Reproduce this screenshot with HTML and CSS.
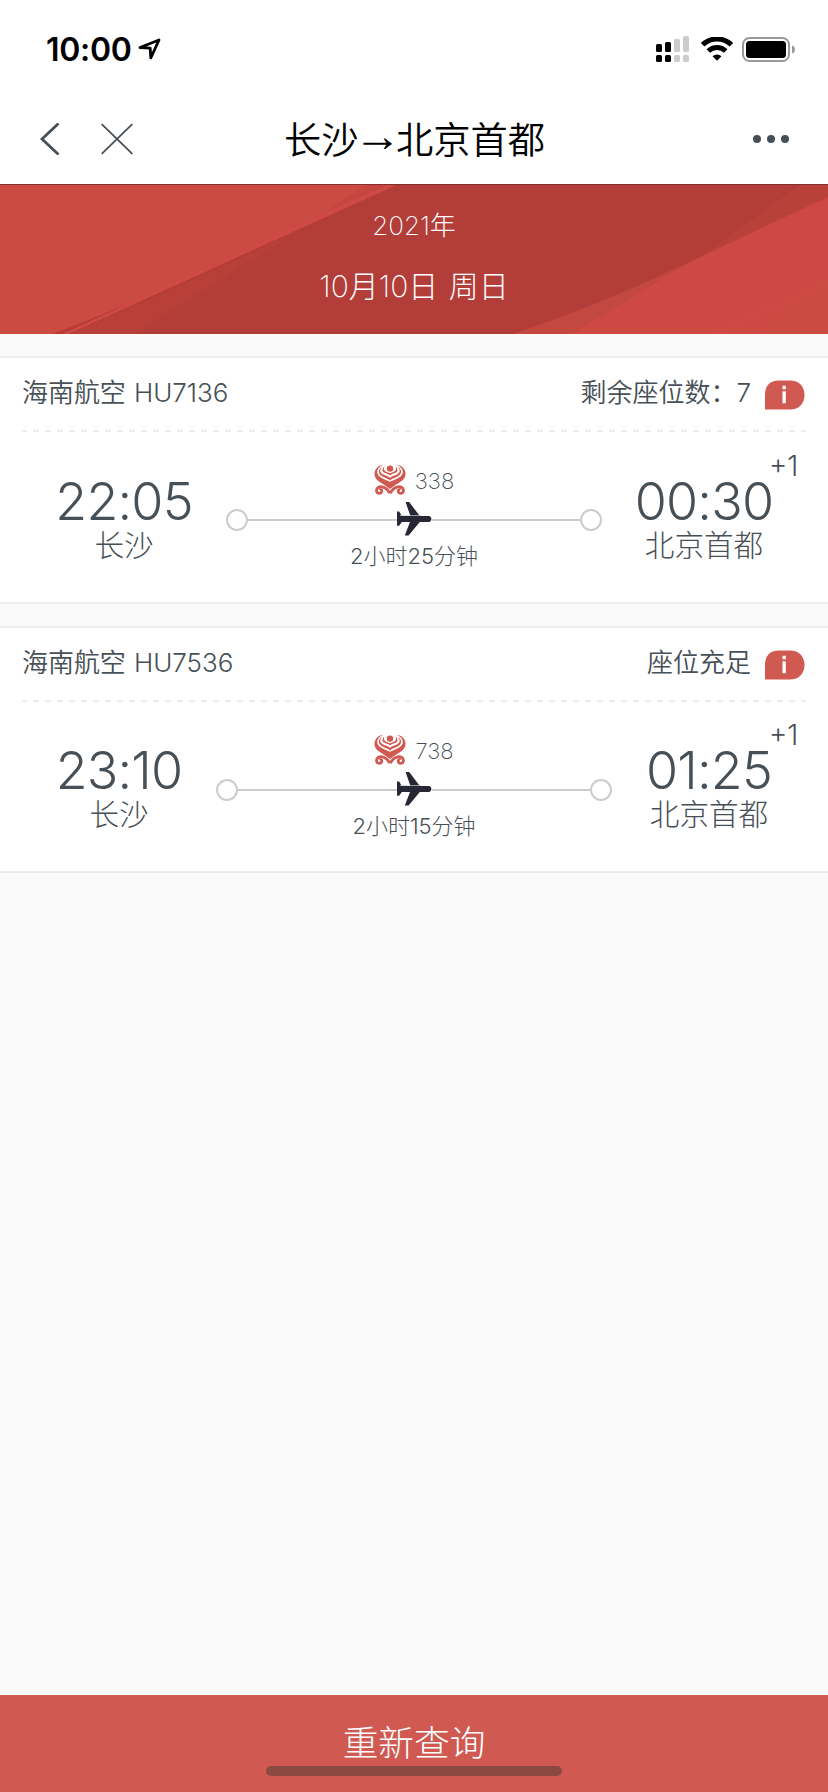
FILE: index.html
```html
<!DOCTYPE html>
<html lang="zh-CN">
<head>
<meta charset="utf-8">
<title>长沙→北京首都</title>
<link rel="stylesheet" href="styles.css">
</head>
<body>
<svg class="defs" width="0" height="0">
  <defs>
    <symbol id="plane" viewBox="0 0 36 34">
      <path d="M0 9.500h2.200l2.600 4.600h8.600L8.600 0h3.600l10.600 14.100h9.400a3 3 0 0 1 0 5.800h-9.400L11.600 33.400H7.800l5.200-13.500H4.800l-2.600 3.800H0z"/>
      <path class="plane-shine" d="M3 13.500h21"/>
    </symbol>
    <symbol id="airline" viewBox="0 0 32 31">
      <circle cx="16" cy="4.600" r="3.200"/>
      <path d="M9.500.8C3.500 1.500.5 5.500.5 10c0 6.500 7 8.500 15.500 15C24.500 18.500 31.500 16.500 31.500 10c0-4.500-3-8.500-9-9.200 4.500 2 6.600 4.500 6.300 7.700-.5 4.600-6.300 6.300-12.800 9.300C9.500 14.800 3.700 13.100 3.200 8.500 2.900 5.300 5 2.800 9.500.8z"/>
      <path d="M8.200 2.600C3.600 6 4 10.200 8 12.300c2.800 1.500 5.500 2.200 8 4.100 2.500-1.900 5.200-2.600 8-4.100 4-2.100 4.400-6.300-.2-9.700 2.800 3.500 2.400 6-.5 7.700-2.200 1.300-5 1.600-7.300 3.400-2.300-1.800-5.100-2.100-7.300-3.400-2.900-1.700-3.300-4.200-.5-7.700z"/>
      <path d="M10.500 2.300C7.600 5.200 8 7.900 11 9.100c1.800.8 3.500 1.100 5 2.300 1.500-1.200 3.200-1.500 5-2.300 3-1.200 3.400-3.900.5-6.800 1.200 2.700.7 4.100-1.200 5.100-1.300.7-3 1-4.300 2-1.300-1-3-1.300-4.300-2-1.900-1-2.400-2.400-1.200-5.100z"/>
      <path class="curl" d="M15.500 29.200C13 22.500 3 20 2.500 26.300c0 4 5.500 4 5.300.6-.1-1.500-1.500-1.600-2.200-.9M16.500 29.200C19 22.500 29 20 29.500 26.300c0 4-5.500 4-5.300.6.1-1.500 1.500-1.600 2.200-.9"/>
    </symbol>
    <symbol id="info" viewBox="0 0 40 30">
      <path d="M0 29.500V15C0 5.500 5 .5 14 .5h11c9 0 14.500 6 14.500 14.500S34 29.500 25 29.500z"/>
      <path class="info-i" d="M17.500 5.800h3.300v3.400h-3.300zM17.500 11.200h3.300v12h-3.300z"/>
    </symbol>
  </defs>
</svg>
<div class="screen">
  <header>
    <div class="status">
      <span class="clock">10:00</span>
      <svg class="locate" width="24" height="23" viewBox="0 0 24 23"><path d="M2 9.500 21 2 12.800 19.800 12.200 10.200z"/></svg>
      <span class="spacer"></span>
      <svg class="signal" width="34" height="27" viewBox="0 0 34 27">
        <g><rect x="0" y="8" width="6" height="8" rx="1.500"/><rect x="9" y="6" width="6" height="10" rx="1.500"/><rect x="0" y="19" width="6" height="7" rx="1.500"/><rect x="9" y="19" width="6" height="7" rx="1.500"/></g>
        <g class="weak"><rect x="18" y="3" width="6" height="13" rx="1.500"/><rect x="27" y="0" width="6" height="16" rx="1.500"/><rect x="18" y="19" width="6" height="7" rx="1.500"/><rect x="27" y="19" width="6" height="7" rx="1.500"/></g>
      </svg>
      <svg class="wifi" width="32" height="24" viewBox="0 0 32 24"><path class="arc" d="M1.600 7.800a20.500 20.500 0 0 1 28.800 0M7.300 14a12.300 12.300 0 0 1 17.400 0"/><path d="M16 23.800l-4.500-4.500a6.400 6.400 0 0 1 9 0z"/></svg>
      <svg class="battery" width="54" height="25" viewBox="0 0 54 25"><rect class="case" x="1" y="1" width="46" height="23" rx="6.500"/><rect x="4" y="4" width="40" height="17" rx="3.500"/><path class="tip" d="M50 8.500c4 1 4 7 0 8z"/></svg>
    </div>
    <nav>
      <svg class="back" width="20" height="32" viewBox="0 0 20 32"><path d="M18.500.5 2 16l16.500 15.500"/></svg>
      <svg class="close" width="32" height="32" viewBox="0 0 32 32"><path d="M.7 1.200 31.300 30.800M31.300 1.200.7 30.800"/></svg>
      <h1>长沙<span class="arrow">→</span>北京首都</h1>
      <svg class="more" width="36" height="8" viewBox="0 0 36 8"><circle cx="4" cy="4" r="4"/><circle cx="18" cy="4" r="4"/><circle cx="32" cy="4" r="4"/></svg>
    </nav>
  </header>
  <section class="banner">
    <svg class="rays" width="828" height="150" viewBox="0 0 828 150" preserveAspectRatio="none">
      <path fill="#cb4b42" d="M0 0H396L66 150H0z"/>
      <path fill="#cf4a44" d="M388 0h8L66 150h-5L322 29z"/>
      <path fill="#c44640" d="M366 0h22L322 29z"/>
      <path fill="#b84039" d="M301 44 132 150H68Q200 93 301 44z"/>
      <path fill="#b53c37" d="M124 121 60 150H50z"/>
      <path fill="#b84239" d="M800 0h28v12L692 78z"/>
      <path fill="#c24840" d="M828 12 692 76Q600 120 510 150h62z"/>
      <path fill="#cf4944" d="M828 12 692 76 570 150H828z"/>
      <path fill="#cb4b42" d="M828 92Q790 118 762 150H828z"/>
      <path fill="none" stroke="#d14e46" d="M828 98 710 150"/>
    </svg>
    <p class="year">2021年</p>
    <p class="date">10月10日 周日</p>
  </section>
  <main>
    <article class="card first">
      <div class="top"><span class="flight">海南航空 HU7136</span><span class="seats">剩余座位数：<b>7</b></span><svg class="info" width="40" height="30"><use href="#info"/></svg></div>
      <div class="trip wide">
        <div class="place"><time>22:05</time><span>长沙</span></div>
        <div class="route">
          <div class="model"><svg width="32" height="31"><use href="#airline"/></svg><span>338</span></div>
          <div class="line"><i></i><hr><svg class="plane" width="36" height="34"><use href="#plane"/></svg><hr><i></i></div>
          <div class="duration">2小时25分钟</div>
        </div>
        <div class="place"><time>00:30</time><span>北京首都</span><sup>+1</sup></div>
      </div>
    </article>
    <article class="card">
      <div class="top"><span class="flight">海南航空 HU7536</span><span class="seats">座位充足</span><svg class="info" width="40" height="30"><use href="#info"/></svg></div>
      <div class="trip">
        <div class="place"><time>23:10</time><span>长沙</span></div>
        <div class="route">
          <div class="model"><svg width="32" height="31"><use href="#airline"/></svg><span>738</span></div>
          <div class="line"><i></i><hr><svg class="plane" width="36" height="34"><use href="#plane"/></svg><hr><i></i></div>
          <div class="duration">2小时15分钟</div>
        </div>
        <div class="place"><time>01:25</time><span>北京首都</span><sup>+1</sup></div>
      </div>
    </article>
  </main>
  <footer><button>重新查询</button><div class="home"></div></footer>
</div>
</body>
</html>
```
FILE: styles.css
```css
* { box-sizing: border-box; margin: 0; padding: 0; }
body { font-family: Inter, "Noto Sans CJK SC", sans-serif; font-weight: 300; color: #475057; background: #fafafa; }
svg { display: block; flex: none; }
.defs { position: absolute; }
.screen { width: 828px; height: 1792px; display: flex; flex-direction: column; overflow: hidden; }
header { height: 184px; background: #fff; }
.status { height: 96px; padding: 2px 32px 0 46px; display: flex; align-items: center; }
.clock { font-size: 32px; font-weight: 600; letter-spacing: -.3px; color: #000; line-height: 40px; padding-top: 2px; width: 86px; white-space: nowrap; }
.locate { margin-left: 6px; fill: none; stroke: #000; stroke-width: 2.8; stroke-linejoin: round; }
.spacer { flex: 1; }
.weak { fill: #ccc; }
.wifi { margin-left: 11px; }
.arc { fill: none; stroke: #000; stroke-width: 5; }
.battery { margin-left: 9px; }
.case { fill: none; stroke: #999; stroke-width: 2; }
.tip { fill: #999; }
nav { height: 88px; display: flex; align-items: center; padding: 0 39px 2px 40px; }
.back { fill: none; stroke: #475057; stroke-width: 2.8; }
.close { margin-left: 41px; fill: none; stroke: #475057; stroke-width: 1.8; }
h1 { flex: 1; margin-left: 151px; padding-bottom: 2px; font: 350 37.300px/50px "Noto Sans CJK SC", sans-serif; color: #000; white-space: nowrap; }
.arrow { display: inline-block; font-family: "Liberation Serif", serif; line-height: 1; transform: translateY(-5px) scale(1.280, 1.200); }
.more { fill: #475057; }
.banner { height: 150px; position: relative; overflow: hidden; background: #b33d38; border-top: 1px solid #85302d; color: #fff; text-align: center; }
.rays { position: absolute; inset: 0; }
.year, .date { position: relative; font-size: 26px; line-height: 36px; padding-top: 23px; }
.date { font-size: 30px; line-height: 40px; padding-top: 22px; word-spacing: 2px; }
.year, .date { font-weight: 250; }
main { flex: 1; padding-top: 22px; display: flex; flex-direction: column; gap: 22px; }
.card { height: 247px; background: #fff; border: solid #ececec; border-width: 2px 0; }
.card.first { height: 248px; }
.top { height: 74px; margin: 0 22px; padding-bottom: 6px; display: flex; align-items: center; font-size: 26px; font-weight: 350; background: repeating-linear-gradient(90deg, #ececec 0 5px, transparent 5px 11px, #ececec 11px 12px) left bottom / 100% 2px no-repeat; }
.flight { flex: 1; word-spacing: 1px; letter-spacing: -.05px; }
.flight, .seats { margin-top: -3px; }
.seats b { font-weight: 350; }
.info { margin: 6px 1px 0 14px; fill: #d05a51; }
.info-i { fill: #fff; }
.trip { display: flex; gap: 34px; padding: 0 56px; }
.place { position: relative; width: 126px; padding-top: 45px; display: flex; flex-direction: column; align-items: center; white-space: nowrap; }
.wide .place { width: 136px; padding-top: 46px; }
time { font-size: 52px; font-weight: 280; letter-spacing: -.8px; line-height: 48px; }
.place span { font-size: 29.600px; line-height: 34px; margin-top: 2px; }
sup { position: absolute; left: 100%; margin-left: -3px; top: 18px; font-size: 28px; line-height: 30px; font-weight: 350; }
.wide sup { top: 19px; }
.route { flex: 1; padding-top: 32px; }
.model { height: 36px; display: flex; justify-content: center; gap: 9px; fill: #d05a51; font-size: 22px; line-height: 34px; }
.model span { font-weight: 250; }
.curl { fill: none; stroke: #d05a51; stroke-width: 2.8; }
.line { height: 40px; display: flex; align-items: center; }
.line i { width: 22px; height: 22px; border: 2px solid #ccc; border-radius: 50%; }
.line hr { flex: 1; border: 0; height: 2px; background: #ccc; margin-right: -1px; }
.plane { margin: -3px -1px 0 0; fill: #282735; }
.plane-shine { stroke: #c5cbd6; stroke-width: .7; }
.duration { text-align: center; font-size: 22px; line-height: 32px; white-space: nowrap; }
footer { height: 97px; background: #d05a51; display: flex; flex-direction: column; align-items: center; }
button { border: 0; background: none; color: #fff; font: 300 35.700px/50px "Noto Sans CJK SC", sans-serif; margin-top: 21px; height: 50px; }
.home { width: 296px; height: 10px; border-radius: 5px; background: #8c4842; }
```
